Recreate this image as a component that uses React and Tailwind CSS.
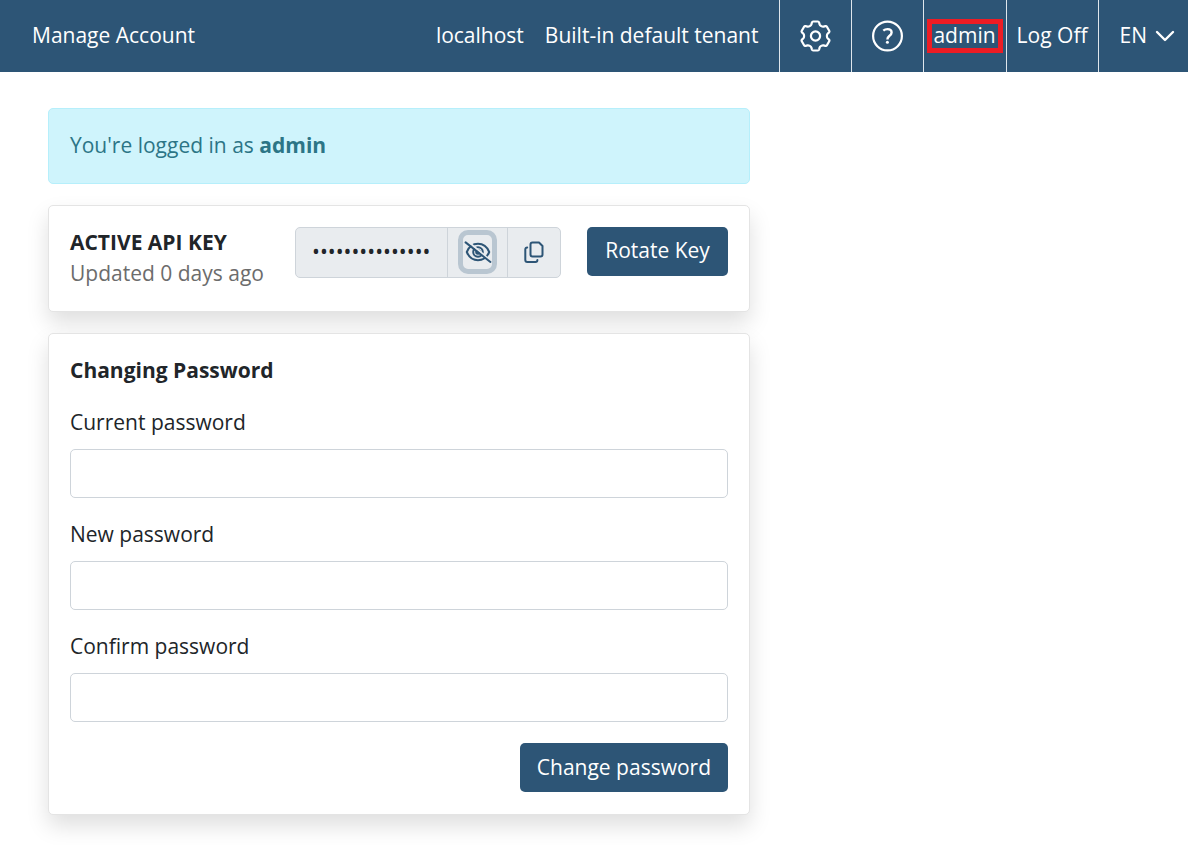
import React, { useState } from 'react';

const GEAR_TOOTH = [
  ['L', [-3.6, -13.5]],
  ['Q', [-3.3, -14.5], [-2.3, -14.5]],
  ['L', [2.3, -14.5]],
  ['Q', [3.3, -14.5], [3.6, -13.5]],
  ['L', [4.1, -11.6]],
  ['C', [4.5, -10.3], [6.67, -9.05], [8, -9.35]],
];

// The same tooth is repeated every 60 degrees around the hub
const gearPath = () => {
  let d = 'M-4.1 -11.6';
  for (let i = 0; i < 6; i++) {
    const cos = Math.cos((i * Math.PI) / 3);
    const sin = Math.sin((i * Math.PI) / 3);
    GEAR_TOOTH.forEach(([cmd, ...points]) => {
      d += cmd + points.map(([x, y]) => `${(x * cos - y * sin).toFixed(2)} ${(x * sin + y * cos).toFixed(2)}`).join(' ');
    });
  }
  return `${d}Z`;
};

const GearIcon = () => (
  <svg className="w-8 h-8" viewBox="-15.5 -16 32 32" fill="none" stroke="currentColor" strokeWidth="2.2" strokeLinejoin="round" aria-hidden="true">
    <path d={gearPath()} />
    <circle r="4.6" />
  </svg>
);

const HelpIcon = () => (
  <svg className="w-8 h-8" viewBox="0.5 0 32 32" fill="none" stroke="currentColor" strokeWidth="2.2" aria-hidden="true">
    <circle cx="16" cy="16" r="14.4" />
    <path d="M11.8 10.6C13 9.6 14.4 9.1 16 9.1C18.6 9.1 20.1 10.4 20.1 12.4C20.1 14 19.3 14.9 17.8 16C16.4 17.1 15.9 17.8 15.9 19.4" strokeWidth="2.4" />
    <circle cx="15.9" cy="22.2" r="1.5" fill="currentColor" stroke="none" />
  </svg>
);

const ChevronIcon = () => (
  <svg className="w-5 h-5" viewBox="0 0 20 20" fill="none" stroke="currentColor" strokeWidth="2.4" strokeLinecap="round" strokeLinejoin="round" aria-hidden="true">
    <path d="M2 7L10 15L18 7" />
  </svg>
);

const EyeOffIcon = () => (
  <svg className="w-7 h-7" viewBox="0 0 28 28" fill="none" stroke="currentColor" strokeWidth="2" strokeLinecap="round" aria-hidden="true">
    <path d="M2.8 14C5 8.6 9.2 5.8 14 5.8S23 8.6 25.2 14C23 19.4 18.8 22.2 14 22.2S5 19.4 2.8 14Z" />
    <circle cx="14" cy="14" r="4.8" />
    <circle cx="14" cy="14" r="1.8" />
    <path d="M3.4 3L26.4 22.4" stroke="#e9ecef" strokeWidth="2" />
    <path d="M1.6 4.4L26.4 24" />
  </svg>
);

const CopyIcon = () => (
  <svg className="w-6 h-6" viewBox="0 0 24 24" fill="none" stroke="currentColor" strokeWidth="2" strokeLinecap="round" strokeLinejoin="round" aria-hidden="true">
    <path d="M10.5 2.5H17L20.5 6V14.5C20.5 15.6 19.6 16.5 18.5 16.5H10.5C9.4 16.5 8.5 15.6 8.5 14.5V4.5C8.5 3.4 9.4 2.5 10.5 2.5Z" />
    <path d="M5.2 7.5C4.1 7.5 3.3 8.3 3.3 9.4V20C3.3 21.1 4.2 22 5.3 22H13.5C14.6 22 15.4 21.2 15.4 20.1" />
  </svg>
);

const PasswordField = ({ id, label }) => (
  <div>
    <label htmlFor={id} className="block mb-[11px]">{label}</label>
    <input id={id} type="password" className="block w-full h-[49px] px-4 rounded-[5px] border border-[#ced4da] bg-white" />
  </div>
);

const Header = () => (
  <header className="flex items-stretch h-[72px] bg-[#2d5576] text-white">
    <h1 className="flex-1 self-center pl-8 pb-0.5">Manage Account</h1>
    <div className="flex items-center gap-[21px] pr-[21px] pb-0.5">
      <span>localhost</span>
      <span>Built-in default tenant</span>
    </div>
    <nav className="flex items-stretch">
      <button aria-label="Settings" className="flex items-center justify-center w-[72px] border-l border-[#dfe6ec]">
        <GearIcon />
      </button>
      <button aria-label="Help" className="flex items-center justify-center w-[72px] border-l border-[#dfe6ec]">
        <HelpIcon />
      </button>
      <a href="#account" className="relative flex items-center pl-[9px] pr-[10px] pb-0.5 border-l border-[#dfe6ec]">
        admin
        <span className="absolute inset-x-[3px] inset-y-[19px] border-5 border-[#ed1c24]" />
      </a>
      <a href="#logoff" className="flex items-center px-[10px] pb-0.5 border-l border-[#dfe6ec]">Log Off</a>
      <button className="flex items-center gap-2 pl-[21px] pr-[13px] pb-0.5 border-l border-[#dfe6ec]">
        EN
        <ChevronIcon />
      </button>
    </nav>
  </header>
);

const ApiKeyCard = () => {
  const [visible, setVisible] = useState(false);

  return (
    <section className="flex items-start justify-between p-[21px] pb-[22px] rounded-[5px] border border-[#e4e4e4] bg-white shadow-[0_11px_22px_rgba(0,0,0,0.13)]">
      <div>
        <h2 className="font-bold">ACTIVE API KEY</h2>
        <p className="text-[#6c6c6c]">Updated 0 days ago</p>
      </div>
      <div className="flex items-start gap-[26px]">
        <div className="flex h-[51px] rounded-[5px] border border-[#ced4da] bg-[#e9ecef] text-[#2d5576]">
          <input
            type={visible ? 'text' : 'password'}
            aria-label="Active API key"
            readOnly
            defaultValue="a81f40c2d97be35"
            className="w-[151px] px-4 pb-0.5 text-[#212529]"
          />
          <div className="flex items-center justify-center w-[60px] pb-0.5 border-l border-[#ced4da]">
            <button
              aria-label="Show key"
              onClick={() => setVisible(!visible)}
              className="flex items-center justify-center w-[39px] h-11 rounded-[10px] border-5 border-[#b9c6d1]"
            >
              <EyeOffIcon />
            </button>
          </div>
          <button aria-label="Copy key" className="flex items-center justify-center w-[53px] pb-0.5 border-l border-[#ced4da]">
            <CopyIcon />
          </button>
        </div>
        <button className="h-[49px] w-[141px] pb-0.5 rounded-[5px] bg-[#2d5576] text-white">Rotate Key</button>
      </div>
    </section>
  );
};

const PasswordCard = () => (
  <form className="flex flex-col gap-[21px] p-[21px] pb-[22px] rounded-[5px] border border-[#e4e4e4] bg-white shadow-[0_11px_22px_rgba(0,0,0,0.13)]">
    <h2 className="font-bold">Changing Password</h2>
    <PasswordField id="current-password" label="Current password" />
    <PasswordField id="new-password" label="New password" />
    <PasswordField id="confirm-password" label="Confirm password" />
    <button type="button" className="self-end h-[49px] px-[17px] rounded-[5px] bg-[#2d5576] text-white">
      Change password
    </button>
  </form>
);

const App = () => {
  return (
    <div className="min-h-screen bg-white text-[#212529] text-[21px] leading-[31px] font-['Open_Sans',sans-serif]">
      <Header />
      <main className="px-12 py-9">
        <div className="flex flex-col gap-[21px] max-w-[702px]">
          <div className="p-[21px] pb-[22px] rounded-[5px] border border-[#b6effb] bg-[#cff4fc] text-[#2c7586]">
            You're logged in as <strong className="font-bold">admin</strong>
          </div>
          <ApiKeyCard />
          <PasswordCard />
        </div>
      </main>
    </div>
  );
};

export default App;
